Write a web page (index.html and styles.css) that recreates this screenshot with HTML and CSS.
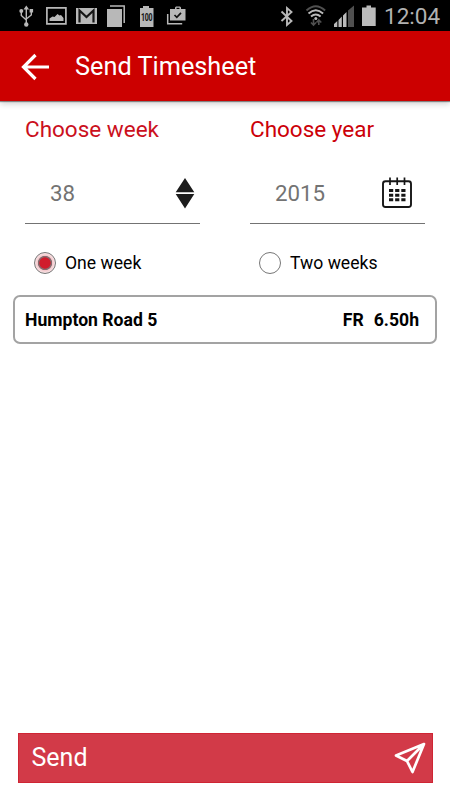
FILE: index.html
```html
<!DOCTYPE html>
<html lang="en">
<head>
<meta charset="utf-8">
<title>Send Timesheet</title>
<link rel="stylesheet" href="styles.css">
</head>
<body>
<div class="screen">
  <div class="status">
    <svg class="cell" viewBox="0 0 30 31"><g fill="none" stroke="#b8b8b8" stroke-width="1.400"><path d="M15.300 8V24M10.300 11v4.500l5 4.500M20.300 11v4l-5 4"/></g><g fill="#b8b8b8"><path d="M15.300 5.500l2.800 4h-5.600zM18.600 9h3.500v3.500h-3.500z"/><circle cx="10.300" cy="11" r="2"/><circle cx="15.300" cy="24.500" r="2.200"/></g></svg>
    <svg class="cell" viewBox="0 0 30 31"><path d="M5.900 7.900h19v16h-19z" fill="none" stroke="#b8b8b8" stroke-width="1.700"/><path d="M8.500 21v-2.500l3-2 2 .5 3-3 2 1.500 1.500-.5 2.500 3V21z" fill="#b8b8b8"/></svg>
    <svg class="cell" viewBox="0 0 30 31"><path d="M5 8h21v16H5z" fill="#b8b8b8"/><path d="M8.500 22.500V10.500l7 6.500 7-6.500V22.500" fill="none" stroke="#161616" stroke-width="2.200"/></svg>
    <svg class="cell" viewBox="0 0 30 31"><path d="M6 9h15v18H6z" fill="#b8b8b8"/><path d="M9 6.100h14.200V23" fill="none" stroke="#b8b8b8" stroke-width="1.500"/></svg>
    <svg class="cell" viewBox="0 0 30 31"><path d="M9 8h3V6h6v2h4.500v19H9z" fill="#b8b8b8"/><text x="15.700" y="14.300" class="charge" text-anchor="middle" transform="scale(1 1.450)">100</text></svg>
    <svg class="cell" viewBox="0 0 30 31"><path d="M9 9h5V7.500l1-1h4l1 1V9h4.500v11.500H9zM15.500 9h3V7.800h-3z" fill="#b8b8b8" fill-rule="evenodd"/><path d="M6.700 14v9.700h14.500" fill="none" stroke="#b8b8b8" stroke-width="1.500"/><path d="M13.500 15l2.300 2.300 4.200-4.500" fill="none" stroke="#111" stroke-width="1.700"/></svg>
    <div class="system">
      <svg class="cell" viewBox="0 0 30 31"><path d="M10.500 11.500l10 9.500-4.500 4V8l4.500 4-10 9" fill="none" stroke="#b8b8b8" stroke-width="1.900"/></svg>
      <svg class="cell" viewBox="0 0 30 31"><g fill="none" stroke-width="2"><path d="M5.500 10.500q9.300-8.500 18.600 0" stroke="#505050"/><path d="M7.500 13.500q7.300-6.500 14.600 0M10 16.500q4.800-4 9.600 0" stroke="#bbb"/></g><circle cx="14.800" cy="18.500" r="1.500" fill="#bbb"/><path d="M12.500 19v6M10 22.500l2.500 2.500 2.500-2.500M17.800 25v-5M15.500 22.500l2.300-2.500 2.500 2.500" stroke="#505050" stroke-width="1.600" fill="none"/></svg>
      <svg class="signal" viewBox="0 0 26 31"><path d="M3 27v-3l3.300-3v6zM7.500 27v-7l3.300-3.500V27zM12 27V15.500l3.500-3.500v15z" fill="#bbb"/><path d="M17 27V10.500l6-5V27z" fill="#505050"/></svg>
      <svg class="battery" viewBox="0 0 23 31"><path d="M5 7.500h4.500v-2h4.500v2h4.700V26H5z" fill="#bbb"/></svg>
      <span class="clock">12:04</span>
    </div>
  </div>
  <header class="bar">
    <svg class="back" viewBox="0 0 30 30"><path d="M15.500 3L3.500 15l12 12M4 15h25" fill="none" stroke="#fff" stroke-width="3.200"/></svg>
    <h1 class="title">Send Timesheet</h1>
  </header>
  <main class="content">
    <div class="columns">
      <section class="field">
        <h2 class="label">Choose week</h2>
        <div class="input"><span>38</span><svg class="sort" viewBox="0 0 20 32"><path d="M10 1l9.300 14.200H.7zM.7 17h18.600L10 31.500z" fill="#1c1c1c"/></svg></div>
        <div class="option"><span class="radio checked"></span><span>One week</span></div>
      </section>
      <section class="field">
        <h2 class="label year">Choose year</h2>
        <div class="input"><span>2015</span><svg class="calendar" viewBox="0 0 32 32"><rect x="2" y="4.200" width="28" height="25.800" rx="2.500" fill="none" stroke="#161616" stroke-width="1.900"/><path d="M9 .5V8M16.200 .5V8M23.500 .5V8" stroke="#161616" stroke-width="1.700"/><path d="M8 13.500h16.500M8 18.200h16.500M8 22.700h16.500" stroke="#161616" stroke-width="2.900" stroke-dasharray="4.200 1.950"/></svg></div>
        <div class="option"><span class="radio"></span><span>Two weeks</span></div>
      </section>
    </div>
    <div class="entry"><span>Humpton Road 5</span><span class="hours"><span>FR</span><span>6.50h</span></span></div>
  </main>
  <button class="send"><span>Send</span><svg class="plane" viewBox="0 0 32 32"><path d="M30 2L2 13.500l11 5.500 5.500 11zM30 2L13 19" fill="none" stroke="#fff" stroke-width="2.700" stroke-linejoin="round"/></svg></button>
</div>
</body>
</html>
```

FILE: styles.css
```css
* { box-sizing: border-box; }
body { margin: 0; background: #fff; font-family: Roboto, "Liberation Sans", sans-serif; color: #000; }
h1, h2 { margin: 0; font-weight: 400; }
svg { flex: none; display: block; }
.screen { width: 450px; height: 800px; display: flex; flex-direction: column; overflow: hidden; }
.status { height: 31px; flex: none; background: #000; display: flex; padding-left: 11px; }
.cell { width: 30px; height: 31px; }
.charge { font-size: 7px; font-weight: 700; fill: #111; letter-spacing: -.2px; }
.system { display: flex; margin-left: 80px; }
.signal { width: 26px; height: 31px; }
.battery { width: 23px; height: 31px; }
.clock { padding-left: 4px; font-size: 22.500px; line-height: 33px; color: #b2b2b2; font-weight: 400; }
.bar { height: 70px; flex: none; background: #c00; display: flex; align-items: center; padding: 2px 0 0 20px; color: #fff; box-shadow: 0 1px 1px rgba(0,0,0,.4), 0 3px 6px rgba(0,0,0,.18); }
.back { width: 30px; height: 30px; }
.title { margin-left: 25px; font-size: 25.300px; line-height: 36px; }
.content { flex: 1; }
.columns { display: flex; gap: 50px; padding: 0 25px; }
.field { width: 175px; }
.label { margin-top: 13px; font-size: 22.500px; line-height: 30px; color: #cb101d; white-space: nowrap; }
.year { color: #cc0008; }
.input { height: 62px; margin-top: 18px; padding: 0 5px 0 25px; border-bottom: 1.500px solid #737373; display: flex; align-items: center; justify-content: space-between; font-size: 22.300px; color: #737373; }
.sort { width: 20px; height: 32px; }
.calendar { width: 32px; height: 32px; margin-right: 7px; }
.option { display: flex; align-items: center; margin-top: 28px; padding-left: 9px; height: 22px; font-size: 17.600px; }
.radio { width: 22px; height: 22px; border: 1px solid #777; border-radius: 50%; margin-right: 9px; }
.checked { background: radial-gradient(circle, #d01c2c 0 5.300px, #87696d 6px 6.800px, #f3c9cd 7.500px, #f9e4e6 10px); }
.entry { height: 49px; margin: 21px 13px 0; padding: 1px 16px 0 10px; border: 2px solid #a3a3a3; border-radius: 7px; display: flex; align-items: center; justify-content: space-between; font-size: 17.600px; font-weight: 700; }
.hours { display: flex; gap: 10px; }
.send { height: 50px; flex: none; margin: 0 17px 17px 17.500px; padding: 0 6px 0 13px; border: 1px solid #cf2534; background: #d23a48; color: #fff; display: flex; align-items: center; justify-content: space-between; font: 25px/36px Roboto, sans-serif; }
.plane { width: 32px; height: 32px; }
```
